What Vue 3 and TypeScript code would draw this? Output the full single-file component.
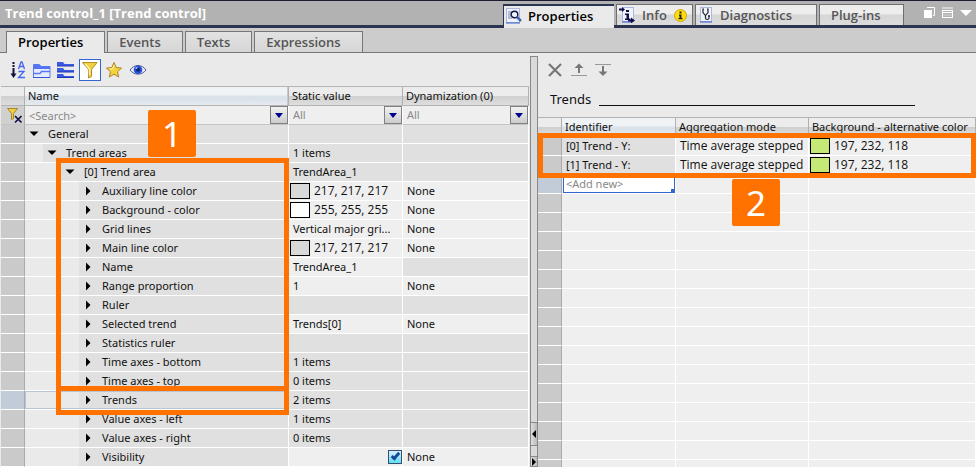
<script setup lang="ts">
import { ref } from 'vue'

interface Row {
  name: string
  level: number
  open?: boolean
  value?: string
  swatch?: string
  dyn?: string
  check?: boolean
  editable?: boolean
  dynEditable?: boolean
  selected?: boolean
}

const rows: Row[] = [
  { name: 'General', level: 0, open: true },
  { name: 'Trend areas', level: 1, open: true, value: '1 items' },
  { name: '[0] Trend area', level: 2, open: true, value: 'TrendArea_1' },
  { name: 'Auxiliary line color', level: 3, value: '217, 217, 217', swatch: '#d9d9d9', dyn: 'None', editable: true, dynEditable: true },
  { name: 'Background - color', level: 3, value: '255, 255, 255', swatch: '#ffffff', dyn: 'None', editable: true, dynEditable: true },
  { name: 'Grid lines', level: 3, value: 'Vertical major gri...', dyn: 'None', editable: true, dynEditable: true },
  { name: 'Main line color', level: 3, value: '217, 217, 217', swatch: '#d9d9d9', dyn: 'None', editable: true, dynEditable: true },
  { name: 'Name', level: 3, value: 'TrendArea_1', editable: true },
  { name: 'Range proportion', level: 3, value: '1', dyn: 'None', editable: true, dynEditable: true },
  { name: 'Ruler', level: 3 },
  { name: 'Selected trend', level: 3, value: 'Trends[0]', dyn: 'None', editable: true, dynEditable: true },
  { name: 'Statistics ruler', level: 3 },
  { name: 'Time axes - bottom', level: 3, value: '1 items' },
  { name: 'Time axes - top', level: 3, value: '0 items' },
  { name: 'Trends', level: 3, value: '2 items', selected: true },
  { name: 'Value axes - left', level: 3, value: '1 items' },
  { name: 'Value axes - right', level: 3, value: '0 items' },
  { name: 'Visibility', level: 3, dyn: 'None', check: true, editable: true, dynEditable: true },
]

const trends = [
  { id: '[0] Trend - Y:', mode: 'Time average stepped', color: '197, 232, 118' },
  { id: '[1] Trend - Y:', mode: 'Time average stepped', color: '197, 232, 118' },
]

const subTabs = ['Properties', 'Events', 'Texts', 'Expressions']
const activeSub = ref('Properties')
const search = ref('')
const visible = ref(true)
</script>

<template>
  <div class="inspector">
    <header class="titlebar">
      <h1>Trend control_1 [Trend control]</h1>
      <nav class="main-tabs">
        <button class="mtab active" type="button">
          <svg width="16" height="16" viewBox="0 0 16 16">
            <rect x="0.5" y="0.5" width="13" height="14" fill="#eef2fb" stroke="#a9b7e2" />
            <path d="M0 15h14" stroke="#3a5fd0" />
            <path d="M2 4h4M2 6h3M2 8h3M2 10h4" stroke="#7c88a8" />
            <circle cx="8.500" cy="6.500" r="3.300" fill="#eef6ff" stroke="#15153f" stroke-width="1.400" />
            <path d="M11 9l4 4" stroke="#4468b4" stroke-width="2.500" />
          </svg>
          <span>Properties</span>
        </button>
        <button class="mtab info" type="button">
          <svg width="16" height="16" viewBox="0 0 16 16">
            <rect x="3.500" y="0.500" width="11" height="14" fill="#eef2fb" stroke="#a9b7e2" />
            <path d="M3 15h9" stroke="#3a5fd0" />
            <path d="M0 2.500h4M9 13.500h4" stroke="#101048" stroke-width="2" />
            <path d="M3 0l3 2.500L3 5zM12 10.500l4 3-4 3z" fill="#101048" />
            <path d="M7 3h3v2H7zM6 6.500h4v5h1.500V13H6v-1.500h1.500V8H6z" fill="#101048" />
          </svg>
          <span>Info</span>
          <svg class="badge-i" width="13" height="13" viewBox="0 0 13 13">
            <circle cx="6.500" cy="6.500" r="6" fill="#ffdc12" stroke="#cfa500" />
            <path d="M5.500 2.500h2v2h-2zM5 5.500h2.500V9h1v1.200H4.500V9h1V6.700H5z" fill="#222" />
          </svg>
        </button>
        <button class="mtab diag" type="button">
          <svg width="13" height="16" viewBox="0 0 13 16">
            <rect x="0.500" y="0.500" width="11" height="14" fill="#eef2fb" stroke="#a9b7e2" />
            <path d="M0 15h12" stroke="#3a5fd0" />
            <path d="M4 2H3v3.500L5 8h1l2-2.500V2H7M5.500 8v3c0 2 3.500 2 3.500 0V9.500" fill="none" stroke="#222" stroke-width="1.200" />
            <circle cx="9" cy="9" r="1" fill="#222" />
          </svg>
          <span>Diagnostics</span>
        </button>
        <button class="mtab plug" type="button"><span>Plug-ins</span></button>
      </nav>
      <div class="window-tools">
        <button type="button" aria-label="Float window">
          <svg width="12" height="12" viewBox="0 0 12 12"><path d="M0 3h8v8H0z" fill="#fff" /><path d="M3 0.500h7.500V8.500H9" fill="none" stroke="#fff" /></svg>
        </button>
        <button type="button" aria-label="Tile window">
          <svg width="12" height="12" viewBox="0 0 12 12"><path d="M0 1h11" stroke="#d5d5d5" stroke-width="2" /><path d="M0 3.500h11M0 5.500h11M0 10.500h11M0.500 3v8M10.500 3v8" stroke="#fff" /><path d="M1 8h9" stroke="#d5d5d5" /></svg>
        </button>
        <button type="button" aria-label="Collapse">
          <svg width="12" height="12" viewBox="0 0 12 12"><path d="M0 3h12L6 9z" fill="#fff" /></svg>
        </button>
      </div>
    </header>

    <nav class="sub-tabs">
      <button
        v-for="t in subTabs"
        :key="t"
        type="button"
        class="stab"
        :class="{ active: t === activeSub }"
        @click="activeSub = t"
      >{{ t }}</button>
    </nav>

    <main class="panes">
      <section class="left">
        <div class="toolbar">
          <button type="button" aria-label="Sort alphabetically">
            <svg width="16" height="18" viewBox="0 0 16 18">
              <path d="M3.500 1v2M3.500 4v2M3.500 7v7" stroke="#10103c" stroke-width="2" />
              <path d="M0.500 12.500h6l-3 4.500z" fill="#10103c" />
              <path d="M8.500 8l2.500-7h1l2.500 7M9.500 5.500h4M8.500 10.500h5.500l-5.500 6H15" fill="none" stroke="#4466ee" stroke-width="1.300" />
            </svg>
          </button>
          <button type="button" aria-label="Group categories">
            <svg width="18" height="18" viewBox="0 0 18 18">
              <path d="M0.500 16.500V3.500h6l1.500 2h9v11z" fill="#e6ecff" stroke="#5b76f0" />
              <path d="M1 3.500h5l2 2h9V8H1z" fill="#5472f4" />
              <path d="M1 12.500h6l1.500-2h8.500" stroke="#5b76f0" stroke-width="1.500" fill="none" />
              <path d="M0 16.500h17" stroke="#3654d8" />
            </svg>
          </button>
          <button type="button" aria-label="Expand categories">
            <svg width="18" height="18" viewBox="0 0 18 18">
              <path d="M0 1h6l1.500 2H17v2H0zM0 7h6l1.500 2H17v2H0zM0 13h6l1.500 2H17v2H0z" fill="#3c59e4" />
              <path d="M0 5h17M0 11h17M0 16.500h17" stroke="#2138b4" />
            </svg>
          </button>
          <button class="pressed" type="button" aria-label="Filter" aria-pressed="true">
            <svg width="18" height="18" viewBox="0 0 18 18">
              <path d="M1.500 1.500h14.500l-5.500 7v7l-3 1.500V8.500z" fill="#f0cf3c" stroke="#b4902c" />
              <path d="M4.500 3L8.500 8v6" stroke="#fff3a6" stroke-width="1.500" fill="none" />
            </svg>
          </button>
          <button type="button" aria-label="Favorites">
            <svg width="18" height="18" viewBox="0 0 18 18">
              <path d="M9 1.500l2.200 5 5.300.600-4 3.600 1.200 5.300L9 13.200 4.300 16l1.200-5.300-4-3.600 5.300-.600z" fill="#f5d33d" stroke="#ac8426" />
              <path d="M9 4L7.700 7.700 4.500 8.200" fill="none" stroke="#fff6b5" />
            </svg>
          </button>
          <button type="button" aria-label="Show visible">
            <svg width="18" height="18" viewBox="0 0 18 18">
              <path d="M1 9c4-6 12-6 16 0-4 5.500-12 5.500-16 0z" fill="#e9ebf6" stroke="#555d8f" />
              <circle cx="9" cy="8.700" r="4.300" fill="#2752dc" />
              <circle cx="9" cy="8.700" r="2" fill="#10236e" /><circle cx="7.500" cy="7" r="1" fill="#a8c2ff" />
            </svg>
          </button>
        </div>

        <table class="grid props">
          <colgroup><col class="c-gut" /><col /><col class="c-val" /><col class="c-dyn" /></colgroup>
          <thead>
            <tr class="head">
              <th class="gut"></th>
              <th class="blue">Name</th>
              <th>Static value</th>
              <th>Dynamization (0)</th>
            </tr>
            <tr class="filter">
              <td class="gut">
                <button type="button" class="clear" aria-label="Clear filter">
                  <svg width="17" height="17" viewBox="0 0 17 17">
                    <path d="M1.500 1.500h10l-4 5v5l-2 1V6.500z" fill="#f0cf3c" stroke="#a8862a" />
                    <path d="M9 9l6.500 6.500M15.500 9L9 15.500" stroke="#101048" stroke-width="1.700" />
                  </svg>
                </button>
              </td>
              <td>
                <div class="combo">
                  <input v-model="search" type="text" placeholder="&lt;Search&gt;" aria-label="Search name" />
                  <button type="button" class="drop" aria-label="Search history"><i></i></button>
                </div>
              </td>
              <td>
                <div class="combo">
                  <select aria-label="Static value filter"><option>All</option></select>
                  <span class="drop"><i></i></span>
                </div>
              </td>
              <td>
                <div class="combo">
                  <select aria-label="Dynamization filter"><option>All</option></select>
                  <span class="drop"><i></i></span>
                </div>
              </td>
            </tr>
          </thead>
          <tbody>
            <tr v-for="r in rows" :key="r.name" :class="{ selected: r.selected }">
              <td class="gut"></td>
              <td class="name">
                <div class="tree" :class="'lv' + r.level">
                  <button type="button" class="label">
                    <svg width="10" height="10" viewBox="0 0 10 10">
                      <path v-if="r.open" d="M0.500 2.500h9L5 7z" />
                      <path v-else d="M3 0.500L7.500 5 3 9.500z" />
                    </svg>
                    <span>{{ r.name }}</span>
                  </button>
                </div>
              </td>
              <td :class="{ edit: r.editable }">
                <div class="cell" :class="{ end: r.check }">
                  <span v-if="r.swatch" class="swatch" :style="{ background: r.swatch }"></span>
                  <input v-if="r.check" v-model="visible" type="checkbox" aria-label="Visibility" />
                  <span v-if="r.value">{{ r.value }}</span>
                </div>
              </td>
              <td :class="{ edit: r.dynEditable }"><div class="cell">{{ r.dyn }}</div></td>
            </tr>
          </tbody>
        </table>

        <div class="mark mark-area"></div>
        <div class="mark mark-trends"></div>
        <div class="step step-one">1</div>
      </section>

      <div class="splitter">
        <button type="button" aria-label="Collapse right pane"><svg width="5" height="8" viewBox="0 0 5 8"><path d="M5 0v8L1 4z" /></svg></button>
        <button type="button" aria-label="Collapse left pane"><svg width="5" height="8" viewBox="0 0 5 8"><path d="M1 0v8l4-4z" /></svg></button>
      </div>

      <section class="right">
        <div class="toolbar">
          <button type="button" aria-label="Delete">
            <svg width="16" height="14" viewBox="0 0 16 14"><path d="M2 1l12 12M14 1L2 13" stroke="#777" stroke-width="2.200" /></svg>
          </button>
          <button type="button" aria-label="Move up">
            <svg width="16" height="14" viewBox="0 0 16 14"><path d="M8 10V4" stroke="#777" stroke-width="2" /><path d="M3.500 5L8 0.500 12.500 5z" fill="#777" /><path d="M0 12.500h16" stroke="#999" /></svg>
          </button>
          <button type="button" aria-label="Move down">
            <svg width="16" height="14" viewBox="0 0 16 14"><path d="M8 3v6" stroke="#777" stroke-width="2" /><path d="M3.500 8.500L8 13l4.500-4.500z" fill="#777" /><path d="M0 1.500h16" stroke="#999" /></svg>
          </button>
        </div>
        <h2>Trends</h2>
        <table class="grid trends">
          <colgroup><col class="c-gut" /><col class="c-id" /><col class="c-mode" /><col /></colgroup>
          <thead>
            <tr class="head">
              <th class="gut"></th>
              <th class="blue">Identifier</th>
              <th>Aggregation mode</th>
              <th>Background - alternative color</th>
            </tr>
          </thead>
          <tbody>
            <tr v-for="t in trends" :key="t.id">
              <td class="gut"></td>
              <td><div class="cell">{{ t.id }}</div></td>
              <td class="edit"><div class="cell wide">{{ t.mode }}</div></td>
              <td class="edit"><div class="cell"><span class="swatch lime"></span><span>{{ t.color }}</span></div></td>
            </tr>
            <tr class="selected">
              <td class="gut"></td>
              <td class="edit">
                <div class="add-box">
                  <input class="add" type="text" placeholder="&lt;Add new&gt;" aria-label="Add new trend" />
                  <i class="handle"></i>
                </div>
              </td>
              <td class="edit"></td>
              <td class="edit"></td>
            </tr>
            <tr v-for="n in 15" :key="n">
              <td class="gut"></td><td class="edit"></td><td class="edit"></td><td class="edit"></td>
            </tr>
          </tbody>
        </table>
        <div class="mark mark-rows"></div>
        <div class="step step-two">2</div>
      </section>
    </main>
  </div>
</template>

<style>
body {
  margin: 0;
  overflow: hidden;
}
</style>

<style scoped>
.inspector {
  height: 100vh;
  overflow: hidden;
  display: flex;
  flex-direction: column;
  box-sizing: border-box;
  background: #eaeaea;
  color: #111;
  font-family: "Noto Sans", "Open Sans", sans-serif;
  font-size: 11px;
}
.inspector *,
.inspector *::after {
  box-sizing: border-box;
}
button,
input,
select {
  margin: 0;
  padding: 0;
  border: 0;
  background: none;
  font: inherit;
  color: inherit;
  outline: none;
}
svg {
  display: block;
  flex: none;
}

/* title bar */
.titlebar {
  flex: none;
  display: flex;
  height: 28px;
  background: #b2b2b2;
  border-top: 1px solid #1d1c30;
  border-bottom: 3px solid #2b3450;
}
h1 {
  flex: 1;
  margin: 0;
  padding-left: 5px;
  font-family: "Open Sans", "Noto Sans", sans-serif;
  font-size: 13px;
  font-weight: 700;
  line-height: 24px;
  color: #fff;
  white-space: nowrap;
}
.main-tabs {
  display: flex;
  gap: 2px;
  padding-top: 3px;
}
.mtab {
  display: flex;
  align-items: center;
  height: 21px;
  padding-left: 4px;
  border: 1px solid #6e6e6e;
  border-bottom: 0;
  background: linear-gradient(#ededed 45%, #d6d6d6 50%, #dcdcdc);
  color: #555;
  font-family: "Open Sans", "Noto Sans", sans-serif;
  font-size: 13px;
  font-weight: 600;
  gap: 7px;
  width: 122px;
}
.mtab.active {
  width: 111px;
  height: 24px;
  padding-left: 2px;
  padding-bottom: 3px;
  gap: 6px;
  border-color: #2b3450;
  border-top-width: 2px;
  border-right-width: 0;
  background: #eaeaea;
  color: #000;
}
.mtab.info {
  width: 77px;
  padding-left: 2px;
}
.mtab.plug {
  width: 85px;
  padding-left: 11px;
}
.window-tools {
  display: flex;
  align-items: center;
  gap: 6px;
  width: 72px;
  padding-left: 20px;
}

/* sub tabs */
.sub-tabs {
  flex: none;
  display: flex;
  gap: 2px;
  height: 25px;
  padding: 3px 0 0 6px;
  background: #ccc;
  border-bottom: 1px solid #777;
}
.stab {
  height: 21px;
  padding: 0 21px 1px 11px;
  border: 1px solid #777;
  border-bottom: 0;
  background: linear-gradient(#e2e2e2, #d6d6d6);
  color: #555;
  font-family: "Open Sans", "Noto Sans", sans-serif;
  font-size: 13px;
  font-weight: 600;
}
.stab.active {
  height: 22px;
  background: #eaeaea;
  color: #000;
}

/* panes */
.panes {
  flex: 1;
  min-height: 0;
  display: flex;
}
.left,
.right {
  position: relative;
  min-width: 0;
}
.left {
  flex: 529;
  padding: 0 1px;
}
.right {
  flex: 439;
}
.splitter {
  flex: none;
  display: flex;
  flex-direction: column;
  justify-content: flex-end;
  gap: 10px;
  width: 8px;
  margin-top: 3px;
  background: #dadada;
  border: 1px solid #888;
  border-bottom: 0;
}
.splitter button {
  height: 24px;
  display: flex;
  align-items: center;
  background: linear-gradient(90deg, #ddd, #bbb);
  border-top: 1px solid #888;
  border-bottom: 1px solid #888;
}
.splitter button:last-child {
  height: 11px;
}
.left .toolbar {
  display: flex;
  align-items: center;
  gap: 2px;
  height: 33px;
  padding-left: 6px;
}
.left .toolbar button {
  display: grid;
  place-items: center;
  width: 22px;
  height: 22px;
}
.left .toolbar .pressed {
  border: 1px solid #3168d0;
  background: #fff;
}

/* grids */
.grid {
  width: 100%;
  table-layout: fixed;
  border-collapse: separate;
  border-spacing: 0;
}
.c-gut { width: 24px; }
.c-val { width: 114px; }
.c-dyn { width: 126px; }
.c-id { width: 114px; }
.c-mode { width: 133px; }
.grid td,
.grid th {
  height: 19px;
  padding: 0;
  overflow: hidden;
  line-height: 16px;
  text-align: left;
  font-weight: 400;
  white-space: nowrap;
}
.grid td {
  background: #e0e0e0;
  border-right: 1px solid #fff;
  border-bottom: 1px solid #fff;
}
.grid td.edit {
  background: #efefef;
}
.grid td.gut {
  background: #cacaca;
  border-right-color: #aaa;
}
.grid .selected td.gut {
  background: #c2ccd8;
}
.grid .head th {
  height: 20px;
  padding-left: 3px;
  border-top: 1px solid #b4b4b4;
  border-right: 1px solid #b0b0b0;
  border-bottom: 1px solid #b4b4b4;
  background: linear-gradient(#ececec 48%, #d0d0d0 52%, #dedede);
}
.grid .head th.blue {
  background: linear-gradient(#f0f3f6 40%, #d8e0e8 55%, #e6ebf0);
}
.props .head th:nth-child(2),
.props td:nth-child(2) {
  box-shadow: inset -1px 0 #c8c8c8;
}
.grid .filter td {
  background: #efefef;
  border-bottom-color: #c4c4c4;
}
.grid .filter td.gut {
  background: #d0d0d0;
}
.clear {
  display: block;
  padding-left: 5px;
}
.combo {
  position: relative;
  display: flex;
  height: 18px;
  color: #888;
}
.combo input,
.combo select {
  flex: 1;
  min-width: 0;
  height: 18px;
  padding-left: 4px;
  appearance: none;
}
.combo input::placeholder,
.add::placeholder {
  color: #888;
  opacity: 1;
}
.drop {
  flex: none;
  display: grid;
  place-items: center;
  width: 18px;
  height: 18px;
  border: 1px solid #808080;
  background: linear-gradient(#f2f2f2, #ccc);
  pointer-events: none;
}
.drop i {
  border: 4px solid transparent;
  border-top: 5px solid #00008b;
  border-bottom: 0;
}
.name .tree {
  height: 18px;
  background: #eaeaea;
}
.lv1 { padding-left: 18px; }
.lv2 { padding-left: 36px; }
.lv3 { padding-left: 54px; }
.label {
  display: flex;
  align-items: center;
  gap: 9px;
  width: 100%;
  height: 18px;
  padding-left: 4px;
  background: #e0e0e0;
}
.selected .tree {
  border: 1px solid #b9c5d4;
  border-width: 1px 0;
  box-shadow: inset 1px 0 #b9c5d4;
}
.selected .label {
  height: 16px;
}
.cell {
  display: flex;
  align-items: center;
  gap: 4px;
  height: 18px;
  padding-left: 4px;
}
.cell:has(.swatch) {
  padding-left: 1px;
}
.cell:has(.swatch),
.cell.wide {
  font-family: "Open Sans", "Noto Sans", sans-serif;
  font-size: 12px;
}
.cell.end {
  justify-content: flex-end;
}
.swatch {
  width: 20px;
  height: 16px;
  border: 1px solid #000;
}
.lime {
  background: #c5e876;
}
input[type="checkbox"] {
  position: relative;
  width: 14px;
  height: 14px;
  border: 1px solid #34506c;
  appearance: none;
  background: linear-gradient(#d8f0ff, #62ddf2);
}
input[type="checkbox"]:checked::after {
  content: "";
  position: absolute;
  left: 4px;
  top: 0;
  width: 5px;
  height: 9px;
  border: solid #164a98;
  border-width: 0 3px 3px 0;
  transform: rotate(40deg);
}

/* right pane */
.right .toolbar {
  display: flex;
  align-items: center;
  gap: 8px;
  height: 33px;
  padding-left: 9px;
}
h2 {
  display: flex;
  align-items: flex-end;
  gap: 8px;
  height: 31px;
  margin: 0;
  padding: 0 61px 9px 12px;
  font-size: 13px;
  font-weight: 400;
  line-height: 18px;
}
h2::after {
  content: "";
  flex: 1;
  height: 1px;
  margin-bottom: 2px;
  background: #111;
}
.add-box {
  position: relative;
  padding-left: 1px;
}
.add {
  display: block;
  width: 100%;
  height: 18px;
  padding: 0 0 2px 2px;
  background: #fff;
  border: 1px solid #3366cc;
}
.handle {
  position: absolute;
  right: 0;
  bottom: 0;
  width: 4px;
  height: 4px;
  background: #3366cc;
}

/* call-outs */
.mark {
  position: absolute;
  border: 5px solid #ff7200;
  pointer-events: none;
}
.mark-area {
  left: 56px;
  right: 241px;
  top: 105px;
  height: 233px;
}
.mark-trends {
  left: 56px;
  right: 241px;
  top: 333px;
  height: 29px;
}
.mark-rows {
  left: 0;
  right: 0;
  top: 80px;
  height: 45px;
}
.step {
  position: absolute;
  display: grid;
  place-items: center;
  width: 48px;
  height: 47px;
  border-radius: 2px;
  background: #ff7200;
  color: #fff;
  font-size: 35px;
  line-height: 47px;
}
.step-one {
  left: 148px;
  top: 57px;
}
.step-two {
  left: 194px;
  top: 126px;
}
</style>
